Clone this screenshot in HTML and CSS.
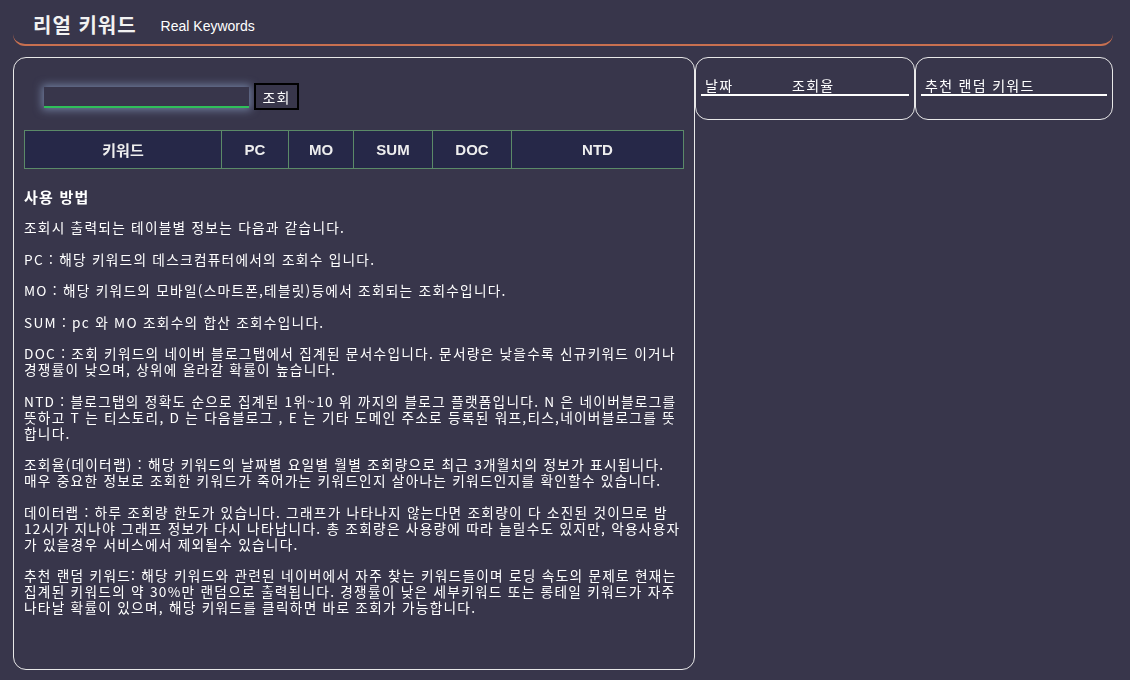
FILE: index.html
```html
<!DOCTYPE html>
<html lang="ko">
<head>
<meta charset="UTF-8">
<meta name="viewport" content="width=device-width, initial-scale=1.0">
<title>리얼 키워드</title>
<link rel="stylesheet" href="styles.css">
</head>
<body>
<div class="header">
    <div class="title">리얼 키워드</div>
    <div class="sub">Real Keywords</div>
</div>

<div class="wrap">
    <div class="main">
        <div class="search">
            <input id="keyword" autofocus>
            <button>조회</button>
        </div>
        <table class="result">
            <thead>
                <tr>
                    <th class="kw">키워드</th>
                    <th class="pc">PC</th>
                    <th class="mo">MO</th>
                    <th class="sum">SUM</th>
                    <th class="doc">DOC</th>
                    <th>NTD</th>
                </tr>
            </thead>
        </table>

        <div class="guide">
            <h3>사용 방법</h3>
            <p>조회시 출력되는 테이블별 정보는 다음과 같습니다.</p>
            <p>PC : 해당 키워드의 데스크컴퓨터에서의 조회수 입니다.</p>
            <p>MO : 해당 키워드의 모바일(스마트폰,테블릿)등에서 조회되는 조회수입니다.</p>
            <p>SUM : pc 와 MO 조회수의 합산 조회수입니다.</p>
            <p>DOC : 조회 키워드의 네이버 블로그탭에서 집계된 문서수입니다. 문서량은 낮을수록 신규키워드 이거나<br>경쟁률이 낮으며, 상위에 올라갈 확률이 높습니다.</p>
            <p>NTD : 블로그탭의 정확도 순으로 집계된 1위~10 위 까지의 블로그 플랫폼입니다. N 은 네이버블로그를<br>뜻하고 T 는 티스토리, D 는 다음블로그 , E 는 기타 도메인 주소로 등록된 워프,티스,네이버블로그를 뜻<br>합니다.</p>
            <p>조회율(데이터랩) : 해당 키워드의 날짜별 요일별 월별 조회량으로 최근 3개월치의 정보가 표시됩니다.<br>매우 중요한 정보로 조회한 키워드가 죽어가는 키워드인지 살아나는 키워드인지를 확인할수 있습니다.</p>
            <p>데이터랩 : 하루 조회량 한도가 있습니다. 그래프가 나타나지 않는다면 조회량이 다 소진된 것이므로 밤<br>12시가 지나야 그래프 정보가 다시 나타납니다. 총 조회량은 사용량에 따라 늘릴수도 있지만, 악용사용자<br>가 있을경우 서비스에서 제외될수 있습니다.</p>
            <p>추천 랜덤 키워드: 해당 키워드와 관련된 네이버에서 자주 찾는 키워드들이며 로딩 속도의 문제로 현재는<br>집계된 키워드의 약 30%만 랜덤으로 출력됩니다. 경쟁률이 낮은 세부키워드 또는 롱테일 키워드가 자주<br>나타날 확률이 있으며, 해당 키워드를 클릭하면 바로 조회가 가능합니다.</p>
        </div>
    </div>

    <div class="side rate">
        <div class="side-head"><span class="date">날짜</span><span>조회율</span></div>
    </div>

    <div class="side random">
        <div class="side-head"><span>추천 랜덤 키워드</span></div>
    </div>
</div>
</body>
</html>
```

FILE: styles.css
```css
body, html {
    margin:0; padding:0;
    background:#38364b; color:#fff;
    font-family:'Noto Sans CJK KR','Noto Sans',sans-serif;
}
.header {
    display:flex; align-items:center;
    margin:0 17px 0 13px; height:44px; padding-left:20px;
    border-bottom:2px solid #c87050; border-radius:0 0 12px 12px;
}
.header .title {
    font-size:20px; font-weight:700; color:#f2f2f2; letter-spacing:1px;
    margin-top:5px;
}
.header .sub {
    font-family:'Liberation Sans',sans-serif; font-size:14px;
    margin-left:24px; margin-top:7px;
}
.wrap {
    display:flex; align-items:flex-start;
    margin:11px 17px 0 13px;
}
.main {
    width:682px; height:613px; box-sizing:border-box;
    border:1px solid #e8e8e8; border-radius:13px;
    padding:25px 10px 0 10px;
}
.search {
    display:flex; align-items:center; margin-left:20px;
}
.search input {
    width:205px; height:21px; box-sizing:border-box;
    background:#38364b; color:#fff; border:none;
    border-bottom:2px solid #2fc05a; outline:none;
    box-shadow:0 0 8px 2px rgba(150,175,215,0.6);
    margin-top:2px; font-size:14px;
}
.search button {
    margin-left:5px; width:45px; height:27px;
    background:#38364b; color:#fff; border:2px solid #000;
    font-family:inherit; font-size:14px; padding:0; letter-spacing:1px;
}
.result {
    width:660px; margin-top:20px; border-collapse:collapse;
}
.result th {
    height:37px; background:#262848; color:#eee;
    border:1px solid #5b8a68; font-family:'Liberation Sans','Noto Sans CJK KR',sans-serif;
    font-size:15px; font-weight:700; padding:0;
}
.result th.kw { width:196px; }
.result th.pc { width:66px; }
.result th.mo { width:64px; }
.result th.sum { width:78px; }
.result th.doc { width:78px; }
.guide {
    padding-top:18px;
}
.guide h3 {
    margin:0 0 12px 0; font-size:15px; font-weight:700; line-height:20px; letter-spacing:1.2px;
}
.guide p {
    margin:0 0 15.5px 0; font-size:13.7px; line-height:16px;
    letter-spacing:1.25px; white-space:nowrap;
}
.side {
    box-sizing:border-box; height:63px;
    border:1px solid #e8e8e8; border-radius:13px;
    padding:18px 5px 0 5px;
}
.side.rate { width:220px; }
.side.random { width:198px; }
.side-head {
    display:flex; font-size:14px; line-height:18px; letter-spacing:1.3px;
    border-bottom:2px solid #fff; padding-left:4px;
}
.side-head .date { width:87px; }
```
